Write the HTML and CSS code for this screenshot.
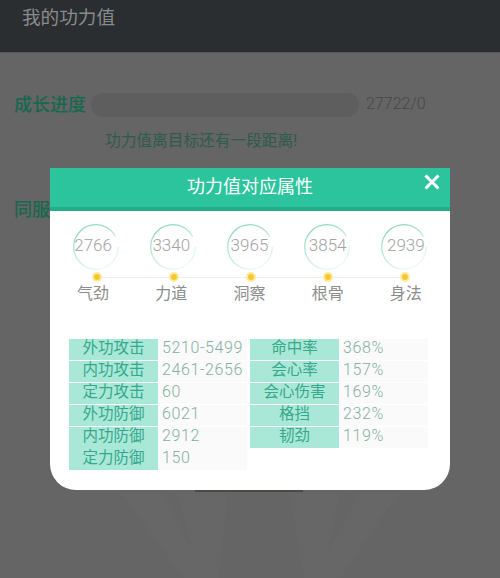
FILE: index.html
```html
<!DOCTYPE html>
<html lang="zh-CN">

<head>
	<meta charset="UTF-8">
	<meta name="viewport" content="width=device-width, initial-scale=1.0">
	<title>我的功力值</title>
	<link rel="stylesheet" href="styles.css">
</head>

<body>
	<div class="topbar">我的功力值</div>
	<div class="progress-row">
		<span class="section-title">成长进度</span>
		<div class="progress-track"></div>
		<span class="progress-num">27722/0</span>
	</div>
	<div class="progress-tip">功力值离目标还有一段距离!</div>
	<div class="section-title server-title">同服排名</div>

	<!-- faint emblem behind the overlay -->
	<svg class="emblem" width="320" height="88" viewBox="0 0 320 88">
		<path class="emblem-rays" d="M22 4 L62 4 L108 88 L84 88 Z M78 4 L128 4 L118 88 L100 88 Z M190 4 L240 4 L222 88 L204 88 Z M258 4 L298 4 L240 88 L216 88 Z" />
		<rect class="emblem-edge" x="95" y="0" width="108" height="2" />
	</svg>

	<div class="modal">
		<div class="modal-head">
			<span>功力值对应属性</span>
			<svg class="close" width="18" height="18" viewBox="0 0 18 18">
				<path d="M2.5 2.5 L15.5 15.5 M15.5 2.5 L2.5 15.5" />
			</svg>
		</div>

		<svg class="defs" width="0" height="0">
			<defs>
				<linearGradient id="fade" x1="0.2" y1="0" x2="0.8" y2="1">
					<stop offset="0" stop-color="#86d4bf" />
					<stop offset="0.5" stop-color="#bfeadd" />
					<stop offset="1" stop-color="#f4fbf9" />
				</linearGradient>
				<symbol id="ring" viewBox="0 0 46 46">
					<circle cx="23" cy="23" r="22.3" fill="none" stroke="url(#fade)" stroke-width="1.2" stroke-dasharray="128.3 11.8" />
				</symbol>
			</defs>
		</svg>

		<div class="ring-stack">
			<div class="rings">
				<svg class="ring"><use href="#ring" /></svg>
				<svg class="ring"><use href="#ring" /></svg>
				<svg class="ring"><use href="#ring" /></svg>
				<svg class="ring"><use href="#ring" /></svg>
				<svg class="ring"><use href="#ring" /></svg>
			</div>
			<div class="ring-nums">
				<span>2766</span>
				<span>3340</span>
				<span>3965</span>
				<span>3854</span>
				<span>2939</span>
			</div>
		</div>

		<div class="dots">
			<i></i><i></i><i></i><i></i><i></i>
		</div>

		<div class="attr-names">
			<span>气劲</span>
			<span>力道</span>
			<span>洞察</span>
			<span>根骨</span>
			<span>身法</span>
		</div>

		<div class="tables">
			<div class="stat-table">
				<div class="stat"><span class="stat-key">外功攻击</span><span class="stat-val">5210-5499</span></div>
				<div class="stat"><span class="stat-key">内功攻击</span><span class="stat-val">2461-2656</span></div>
				<div class="stat"><span class="stat-key">定力攻击</span><span class="stat-val">60</span></div>
				<div class="stat"><span class="stat-key">外功防御</span><span class="stat-val">6021</span></div>
				<div class="stat stat-joined"><span class="stat-key">内功防御</span><span class="stat-val">2912</span></div>
				<div class="stat"><span class="stat-key">定力防御</span><span class="stat-val">150</span></div>
			</div>
			<div class="stat-table">
				<div class="stat"><span class="stat-key">命中率</span><span class="stat-val">368%</span></div>
				<div class="stat"><span class="stat-key">会心率</span><span class="stat-val">157%</span></div>
				<div class="stat"><span class="stat-key">会心伤害</span><span class="stat-val">169%</span></div>
				<div class="stat"><span class="stat-key">格挡</span><span class="stat-val">232%</span></div>
				<div class="stat"><span class="stat-key">韧劲</span><span class="stat-val">119%</span></div>
			</div>
		</div>
	</div>
</body>

</html>
```

FILE: styles.css
```css
* {
	box-sizing: border-box;
	font-family: Roboto, "Noto Sans CJK SC", sans-serif;
}

body {
	margin: 0;
	height: 578px;
	overflow: hidden;
	position: relative;
	background: #656565;
}

.topbar {
	height: 52px;
	padding: 3px 0 0 22px;
	background: #2b2e31;
	color: #8a8b8c;
	font-size: 18.6px;
	line-height: 30px;
	box-shadow: 0 1px 0 #555;
}

.progress-row {
	display: flex;
	align-items: center;
	margin-top: 41px;
	padding-left: 14px;
	height: 24px;
}

.section-title {
	color: #16684e;
	font-size: 18px;
	font-weight: 500;
	line-height: 24px;
}

.progress-track {
	width: 268px;
	height: 24px;
	margin-left: 5px;
	border-radius: 12px;
	background: #5e5e5e;
}

.progress-num {
	margin: -3px 0 0 7px;
	color: #454746;
	font-size: 16px;
	font-weight: 300;
}

.progress-tip {
	margin: 12px 0 0 105px;
	color: #2c5c4c;
	font-size: 15.7px;
	line-height: 24px;
}

.server-title {
	margin: 45px 0 0 14px;
}

.emblem {
	position: absolute;
	left: 100px;
	top: 490px;
}

.emblem-rays {
	fill: #676767;
}

.emblem-edge {
	fill: #4a4a46;
}

.modal {
	position: absolute;
	left: 50px;
	top: 168px;
	width: 400px;
	height: 322px;
	background: #fff;
	border-radius: 0 0 26px 26px;
}

.modal-head {
	position: relative;
	height: 43px;
	padding-top: 5px;
	background: #2bc49d;
	border-bottom: 4px solid #22ae8a;
	color: #fff;
	font-size: 18px;
	line-height: 28px;
	text-align: center;
}

.close {
	position: absolute;
	top: 5px;
	right: 9px;
}

.close path {
	fill: none;
	stroke: #fff;
	stroke-width: 3;
}

.defs {
	position: absolute;
}

.ring-stack {
	display: grid;
	margin-top: 13px;
	padding-left: 23px;
}

.rings,
.ring-nums {
	grid-area: 1 / 1;
	display: grid;
	height: 46px;
}

.rings {
	grid-template-columns: repeat(5, 77px);
}

.ring {
	width: 46px;
	height: 46px;
}

.ring-nums {
	grid-template-columns: repeat(5, 78.2px);
	margin-left: -19px;
	color: #a3a3a3;
	font-size: 17px;
	font-weight: 300;
	line-height: 42px;
	text-align: center;
}

.dots {
	display: grid;
	grid-template-columns: repeat(5, 77px);
	justify-items: center;
	align-items: center;
	height: 10px;
	margin: 2px 0 0 8px;
	width: 385px;
	background: linear-gradient(#eeeeee, #eeeeee) center / 308px 1px no-repeat;
}

.dots i {
	width: 10px;
	height: 10px;
	border-radius: 50%;
	background: #f5c92e;
	border: 2px solid #fdeaa0;
}

.attr-names {
	display: grid;
	grid-template-columns: repeat(5, 78.2px);
	margin: 1px 0 0 4px;
	color: #8c8c8c;
	font-size: 16px;
	line-height: 22px;
	text-align: center;
}

.tables {
	display: flex;
	align-items: flex-start;
	gap: 3px;
	margin: 34px 0 0 19px;
}

.stat-table {
	display: flex;
	flex-direction: column;
	gap: 1px;
	width: 178px;
}

.stat {
	display: flex;
	height: 21px;
	line-height: 18px;
	font-size: 15.5px;
	background: #fafafa;
}

.stat-joined {
	margin-bottom: -1px;
	height: 22px;
}

.stat-key {
	width: 89px;
	background: #a9e8d6;
	color: #35a88d;
	text-align: center;
}

.stat-val {
	padding-left: 4px;
	color: #86b0a4;
	font-size: 16px;
	font-weight: 300;
	line-height: 18px;
	letter-spacing: 0.6px;
}
```
